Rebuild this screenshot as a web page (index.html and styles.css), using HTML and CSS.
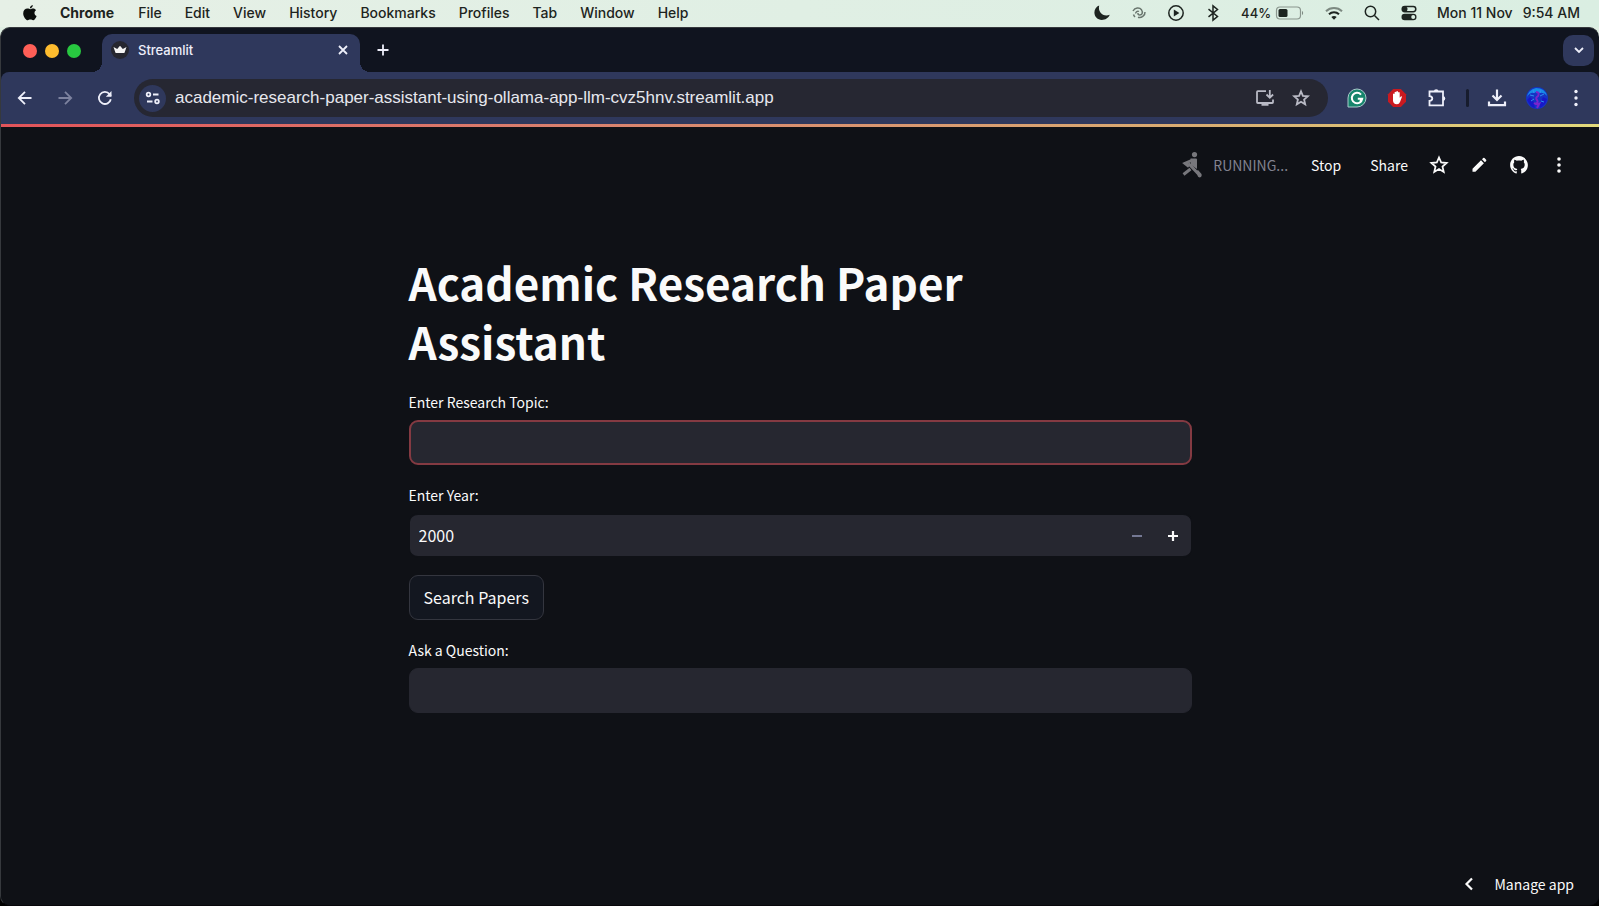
FILE: index.html
```html
<!DOCTYPE html>
<html lang="en">
<head>
<meta charset="utf-8">
<title>Streamlit</title>
<link rel="stylesheet" href="styles.css">
</head>
<body>
<div class="desktop">
  <header class="menubar">
    <nav class="menus" aria-label="Menu bar">
      <button class="menu-item apple" aria-label="Apple menu">
        <svg width="16" height="18" viewBox="0 0 16 18"><path d="M11.2 4.600c1 0 2.200.6 2.900 1.600-2.400 1.400-2 4.800.5 5.700-.6 1.800-2.100 4.300-3.500 4.300-1 0-1.400-.6-2.700-.6s-1.700.6-2.700.6C4.100 16.200 1.200 12.700 1.200 9.400c0-3.200 2-4.800 4.300-4.800 1.100 0 2.100.7 2.800.7.700 0 1.700-.7 2.900-.7zM10.800 1c.1 1.800-1.200 3.400-2.900 3.400C7.700 2.700 9.200 1.200 10.800 1z"/></svg>
      </button>
      <button class="menu-item app-name">Chrome</button>
      <button class="menu-item">File</button>
      <button class="menu-item">Edit</button>
      <button class="menu-item">View</button>
      <button class="menu-item">History</button>
      <button class="menu-item">Bookmarks</button>
      <button class="menu-item">Profiles</button>
      <button class="menu-item">Tab</button>
      <button class="menu-item">Window</button>
      <button class="menu-item">Help</button>
    </nav>
    <div class="status">
      <svg width="18" height="18" viewBox="0 0 18 18"><path d="M6.200 1.500C3.300 2.500 1.400 5.400 1.400 8.600c0 4.100 3.300 7.400 7.400 7.400 3.400 0 6.700-2 7.900-5.200-6.500 2.300-12.100-2.500-10.500-9.300z"/></svg>
      <svg class="faint" width="18" height="18" viewBox="0 0 18 18"><path class="line" d="M3 7C5 3.500 9.500 3.200 11.500 5.800c1.800 2.700.5 5.200-1.700 5.200-1.300 0-2-.8-1.800-2M15 8c.3 3.600-3.800 6.200-7 5.200M5.800 9.500C5.500 8 7.500 6.500 9 7.500M3.500 10.500c.3 1 .8 1.800 1.500 2.500"/></svg>
      <svg width="18" height="18" viewBox="0 0 18 18"><circle class="line" cx="9" cy="9" r="7.200"/><path d="M6.800 5.600v6.800l5.600-3.400z"/></svg>
      <svg width="18" height="18" viewBox="0 0 18 18"><path class="line" d="M4.500 5.200l9 7.300L9 16.200V1.800l4.500 3.700-9 7.300"/></svg>
      <span class="battery"><span class="percent">44%</span>
      <svg width="30" height="18" viewBox="0 0 30 18"><rect class="hair" x="1.500" y="3" width="24" height="12" rx="3.500"/><rect x="3.500" y="5" width="9" height="8" rx="1.500"/><path d="M27 7v4c1.500-.5 1.500-3.500 0-4z" opacity=".5"/></svg></span>
      <svg width="20" height="18" viewBox="0 0 20 18"><path class="wifi pale" d="M2 7.200c4.500-4.200 11.500-4.200 16 0"/><path class="wifi" d="M5 10.300c2.800-2.700 7.200-2.700 10 0"/><path d="M10 15.800l-2.700-2.900c1.500-1.300 3.900-1.300 5.400 0z"/></svg>
      <svg width="18" height="18" viewBox="0 0 18 18"><circle class="line" cx="7.500" cy="7.500" r="5.200"/><path class="line" d="M11.500 11.500l4.500 4.500"/></svg>
      <svg width="18" height="18" viewBox="0 0 18 18"><rect x="1.500" y="9.800" width="15" height="6.500" rx="3.250"/><circle class="mint" cx="13.200" cy="13" r="2"/><rect class="line" x="2.200" y="2.500" width="13.600" height="5.200" rx="2.600"/><circle cx="5" cy="5.100" r="2.500"/></svg>
      <time class="clock"><span>Mon 11 Nov</span><span>9:54 AM</span></time>
    </div>
  </header>

  <div class="window">
    <div class="tabstrip">
      <div class="lights"><button class="light red" aria-label="Close window"></button><button class="light yellow" aria-label="Minimise"></button><button class="light green" aria-label="Zoom"></button></div>
      <div class="tab">
        <svg width="18" height="18" viewBox="0 0 18 18"><circle cx="9" cy="9" r="9" fill="#262730"/><path d="M2.500 6l3.700 2L9 4.800 11.800 8l3.700-2-1.900 5.500q-.2.600-.8.600H5.200q-.6 0-.8-.6z" fill="#f5f5f5"/></svg>
        <span class="tab-title">Streamlit</span>
        <button class="icon-btn" aria-label="Close tab"><svg width="16" height="16" viewBox="0 0 16 16"><path class="stroke" d="M4 4l8 8M12 4l-8 8"/></svg></button>
      </div>
      <button class="icon-btn new-tab" aria-label="New tab"><svg width="16" height="16" viewBox="0 0 16 16"><path class="stroke" d="M8 2.500v11M2.500 8h11"/></svg></button>
      <button class="icon-btn tab-search" aria-label="Search tabs"><svg width="16" height="16" viewBox="0 0 16 16"><path class="stroke" d="M4 6l4 4 4-4"/></svg></button>
    </div>

    <div class="toolbar">
      <button class="icon-btn" aria-label="Back"><svg width="18" height="18" viewBox="0 0 18 18"><path class="stroke" d="M15.500 9H3M9 2.800L2.800 9 9 15.200"/></svg></button>
      <button class="icon-btn dim" aria-label="Forward"><svg width="18" height="18" viewBox="0 0 18 18"><path class="stroke" d="M2.500 9H15M9 2.800L15.200 9 9 15.200"/></svg></button>
      <button class="icon-btn" aria-label="Reload"><svg width="18" height="18" viewBox="0 0 18 18"><path class="stroke" d="M14.800 10.200A6 6 0 1 1 13.600 5.200L15 6.800"/><path d="M15.500 2v5.700H9.800z" fill="currentColor"/></svg></button>
      <div class="omnibox">
        <button class="site-info" aria-label="Site information"><svg width="18" height="18" viewBox="0 0 18 18"><circle class="stroke" cx="4.500" cy="5.500" r="1.800"/><path class="stroke" d="M9 5.500h5.500M3 12.500h5.500"/><circle class="stroke" cx="13" cy="12.500" r="1.800"/></svg></button>
        <input class="url" aria-label="Address" value="academic-research-paper-assistant-using-ollama-app-llm-cvz5hnv.streamlit.app">
        <button class="icon-btn soft" aria-label="Install"><svg width="20" height="20" viewBox="0 0 20 20"><path class="stroke" d="M11 3.200H2.800q-.8 0-.8.800v10.200q0 .8.800.8h14.400q.8 0 .8-.8V11.500M14.800 2v7.500M11.500 6.500l3.300 3.300 3.300-3.300"/><path d="M6.500 15h7v2.800h-7z" fill="currentColor"/></svg></button>
        <button class="icon-btn soft" aria-label="Bookmark"><svg width="18" height="18" viewBox="0 0 18 18"><path class="stroke" d="M9 2.300l1.900 4.600 4.900.4-3.700 3.200 1.100 4.800L9 12.700l-4.200 2.600 1.100-4.800-3.700-3.200 4.900-.4z"/></svg></button>
      </div>
      <div class="extensions">
        <button class="icon-btn ext" aria-label="Grammarly"><svg width="20" height="20" viewBox="0 0 20 20"><path d="M1 10a9 9 0 1 1 9 9H1z" fill="#16856c" stroke="#a9c9cb"/><path d="M14 6.600A5.200 5.200 0 1 0 15.200 10.800H10.800M13.200 13.200l2-2.400" fill="none" stroke="#fff" stroke-width="2"/></svg></button>
        <button class="icon-btn ext" aria-label="Ad blocker"><svg width="20" height="20" viewBox="0 0 20 20"><path d="M6.200 1h7.600L19 6.200v7.600L13.800 19H6.200L1 13.800V6.200z" fill="#ca1a20"/><path d="M6 10V6q.8-1 1.600 0V4.200q.8-1 1.700 0v-.7q.8-1 1.700 0v1q.9-.9 1.700 0v5.300l1.100-1.400q1.100-.6 1.200.4l-2 5.200q-.9 2.200-3 2.200-4 0-4-3.700z" fill="#fff"/></svg></button>
        <button class="icon-btn ext" aria-label="Extensions"><svg width="20" height="20" viewBox="0 0 20 20"><path class="stroke" d="M2.500 3.500H16v13.800H2.500v-4.500q2.800-.2 2.800-2.300T2.500 8.200z"/><path d="M6.900 3.500a2.300 2.300 0 0 1 4.600 0zM16 8.200a2.300 2.300 0 0 1 0 4.600z" fill="currentColor"/></svg></button>
        <span class="divider"></span>
        <button class="icon-btn" aria-label="Downloads"><svg width="20" height="20" viewBox="0 0 20 20"><path class="stroke bold" d="M10 1.500v10M5.500 7.500L10 12l4.500-4.500M2 13.500v3.700h16v-3.700"/></svg></button>
        <button class="icon-btn" aria-label="Profile"><svg width="24" height="24" viewBox="0 0 24 24"><circle cx="12" cy="12" r="11" fill="#1534c4"/><path d="M2 11q1-7 9-9 9 0 11 8-3-4-7-3-3-2-6 0-4-1-7 4z" fill="#168be8"/><path d="M2 14q4 8 8 8l-2-8-3-3zM22 13l-4-2-3 7v4q6-3 7-9z" fill="#1717c9"/><path d="M11 6q4 0 2 4-3 2-1 4 2 3-2 4M9 17q3 2 5 1l-2 4" fill="none" stroke="#7a24cc" stroke-width="2"/><path d="M5 9l4 1M15 10l4-2M6 15l3-2M16 15l3 1M8 4l1 3M16 4l-1 3" stroke="#2f8ef0" stroke-width="1" fill="none"/></svg></button>
        <button class="icon-btn" aria-label="Menu"><svg width="18" height="18" viewBox="0 0 18 18" fill="currentColor"><circle cx="9" cy="2.500" r="1.700"/><circle cx="9" cy="9" r="1.700"/><circle cx="9" cy="15.500" r="1.700"/></svg></button>
      </div>
    </div>

    <div class="page">
      <div class="decoration"></div>
      <div class="app-header">
        <svg class="runner" width="22" height="28" viewBox="0 0 22 28"><circle cx="13.500" cy="3.600" r="2.600"/><path d="M9.500 7.500h5.500q1 0 1 1V18l-6-4z"/><path class="limb" d="M11.500 9L4 12.300l4 3.200M7.500 12.500l10 10.500M9.500 18L2.500 23.500"/><path d="M15 20.500l2-1.500 3.500 4q.8 2.500-1.700 3.500-1.800 0-2.300-2z"/></svg>
        <span class="running">RUNNING...</span>
        <button class="text-btn stop">Stop</button>
        <button class="text-btn share">Share</button>
        <div class="actions">
          <button class="icon-btn" aria-label="Favourite"><svg width="20" height="20" viewBox="0 0 20 20"><path class="stroke" d="M10 2.500l2.200 5 5.400.5-4.100 3.600 1.200 5.300-4.700-2.800-4.700 2.800 1.200-5.300L2.400 8l5.400-.5z"/></svg></button>
          <button class="icon-btn" aria-label="Edit"><svg width="20" height="20" viewBox="0 0 20 20" fill="currentColor"><path d="M3.500 13.800L12 5.300l2.900 2.900-8.500 8.500H3.500zM13 4.300l1.200-1.200q.7-.6 1.300 0l1.600 1.600q.6.600 0 1.300l-1.200 1.200z"/></svg></button>
          <button class="icon-btn" aria-label="GitHub"><svg width="20" height="20" viewBox="-1 -1 18 18" fill="currentColor"><path d="M8 0C3.580 0 0 3.580 0 8c0 3.540 2.290 6.530 5.470 7.590.4.070.55-.17.55-.38 0-.19-.01-.82-.01-1.490-2.010.37-2.530-.49-2.690-.94-.09-.23-.48-.94-.82-1.130-.28-.15-.68-.52-.01-.53.63-.01 1.080.58 1.230.82.72 1.210 1.870.87 2.330.66.07-.52.28-.87.51-1.070-1.780-.2-3.640-.89-3.640-3.950 0-.87.31-1.590.82-2.150-.08-.2-.36-1.020.08-2.120 0 0 .67-.21 2.200.82.64-.18 1.320-.27 2-.27s1.360.09 2 .27c1.530-1.040 2.200-.82 2.200-.82.44 1.100.16 1.920.08 2.120.51.56.82 1.270.82 2.150 0 3.070-1.870 3.750-3.650 3.950.29.25.54.73.54 1.480 0 1.070-.01 1.930-.01 2.200 0 .21.15.46.55.38A8.010 8.010 0 0 0 16 8c0-4.420-3.580-8-8-8z"/></svg></button>
          <button class="icon-btn" aria-label="App menu"><svg width="20" height="20" viewBox="0 0 20 20" fill="currentColor"><circle cx="10" cy="4" r="1.800"/><circle cx="10" cy="10" r="1.800"/><circle cx="10" cy="16" r="1.800"/></svg></button>
        </div>
      </div>

      <main class="content">
        <h1>Academic Research Paper Assistant</h1>
        <form class="form">
          <div class="field">
            <label for="topic">Enter Research Topic:</label>
            <input class="box active" id="topic" type="text">
          </div>
          <div class="field">
            <label for="year">Enter Year:</label>
            <div class="box number">
              <input id="year" type="text" inputmode="numeric" value="2000">
              <button type="button" class="step dim" aria-label="Decrease"><svg width="12" height="12" viewBox="0 0 12 12"><path class="stroke" d="M1 6h10"/></svg></button>
              <button type="button" class="step" aria-label="Increase"><svg width="12" height="12" viewBox="0 0 12 12"><path class="stroke bold" d="M1 6h10M6 1v10"/></svg></button>
            </div>
          </div>
          <button type="button" class="search">Search Papers</button>
          <div class="field">
            <label for="question">Ask a Question:</label>
            <input class="box" id="question" type="text">
          </div>
        </form>
      </main>

      <footer class="footer">
        <button class="manage"><svg width="16" height="16" viewBox="0 0 16 16"><path class="stroke bold" d="M11 2.500L5.500 8l5.500 5.500"/></svg><span>Manage app</span></button>
      </footer>
    </div>
  </div>
</div>
</body>
</html>
```

FILE: styles.css
```css
* { box-sizing: border-box; }

body {
  margin: 0;
  background: #000;
  font-family: Inter, "Liberation Sans", sans-serif;
}

button, input { font: inherit; color: inherit; }
button { padding: 0; border: 0; background: none; }
input { min-width: 0; outline: 0; }
svg { display: block; flex: none; overflow: visible; }

.stroke {
  fill: none;
  stroke: currentColor;
  stroke-width: 1.8;
}
.stroke.bold { stroke-width: 2.2; }

.desktop {
  display: flex;
  flex-direction: column;
  min-height: 100vh;
  background: linear-gradient(#dfeee2 40px, #000 40px);
}

/* macOS menu bar */
.menubar {
  display: flex;
  justify-content: space-between;
  align-items: center;
  height: 27px;
  padding: 0 19px 2px 22px;
  background: linear-gradient(90deg, #e6f0e6, #daeee2);
  color: #1d2420;
  font-size: 14px;
  font-weight: 500;
}
.menus { display: flex; align-items: center; gap: 23px; }
.app-name { margin: 0 1px 0 -1px; font-weight: 700; }
.apple svg { fill: #0c0f0d; }
.status { display: flex; align-items: center; gap: 19px; }
.status svg { fill: #1d2420; }
.status .line { fill: none; stroke: #1d2420; stroke-width: 1.5; }
.status .hair { fill: none; stroke: #8a968e; stroke-width: 1.2; }
.status .wifi { fill: none; stroke: #1d2420; stroke-width: 2; }
.status .pale { opacity: 0.5; }
.status .mint { fill: #daeee2; }
.status .faint { opacity: 0.6; }
.battery { display: flex; align-items: center; gap: 4px; }
.percent { font-size: 13px; }
.clock { display: flex; gap: 10px; }

/* Browser window */
.window {
  display: flex;
  flex: 1;
  flex-direction: column;
  overflow: hidden;
  border: 1px solid #36393d;
  border-right: 0;
  border-bottom-color: #08070b;
  border-radius: 10px;
  background: #10141f;
  color: #eeeffa;
}
.icon-btn { display: grid; place-items: center; }
.dim { color: #7d829f; }
.soft { color: #b9bac5; }

.tabstrip {
  display: flex;
  align-items: center;
  height: 44px;
  padding: 6px 5px 0 22px;
}
.lights { display: flex; gap: 8px; margin: 0 21px 5px 0; }
.light { width: 14px; height: 14px; border-radius: 50%; }
.red { background: #ff5f57; }
.yellow { background: #febc2e; }
.green { background: #28c840; }
.tab {
  position: relative;
  display: flex;
  align-items: center;
  gap: 9px;
  width: 258px;
  height: 38px;
  padding: 0 9px 6px;
  border-radius: 10px 10px 0 0;
  background: #2f385c;
}
.tab::before, .tab::after {
  content: "";
  position: absolute;
  bottom: 0;
  width: 10px;
  height: 10px;
}
.tab::before { right: 100%; background: radial-gradient(circle at 0 0, transparent 10px, #2f385c 10px); }
.tab::after { left: 100%; background: radial-gradient(circle at 100% 0, transparent 10px, #2f385c 10px); }
.tab-title { flex: 1; font-size: 13px; font-weight: 500; }
.new-tab { margin: 0 auto 6px 15px; }
.tab-search {
  width: 31px;
  height: 31px;
  margin-bottom: 6px;
  border-radius: 10px;
  background: #2f385c;
}

.toolbar {
  display: flex;
  align-items: center;
  gap: 22px;
  height: 52px;
  padding: 0 14px 0 15px;
  border-radius: 8px 8px 0 0;
  background: #2f385c;
}
.omnibox {
  display: flex;
  flex: 1;
  align-items: center;
  gap: 17px;
  height: 38px;
  margin-left: -2px;
  padding: 0 18px 0 5px;
  border-radius: 19px;
  background: #262732;
}
.site-info {
  display: grid;
  place-items: center;
  width: 27px;
  height: 27px;
  margin-right: -8px;
  border-radius: 50%;
  background: #2f385c;
}
.url {
  flex: 1;
  padding: 0;
  border: 0;
  background: none;
  color: #e6e7ee;
  font-family: "Liberation Sans", Arial, sans-serif;
  font-size: 17px;
}
.extensions { display: flex; align-items: center; gap: 18px; margin-left: -4px; }
.ext { width: 22px; }
.divider { width: 3px; height: 18px; border-radius: 2px; background: #171c2d; }

/* Streamlit page */
.page {
  display: flex;
  flex: 1;
  flex-direction: column;
  background: #0f1116;
  color: #fafafa;
  font-family: "Noto Sans CJK JP", "Open Sans", sans-serif;
}
.decoration {
  height: 3px;
  background: linear-gradient(90deg, #e2545a, #d9806e 35%, #d9ad72 75%, #e2da7c);
}
.app-header {
  display: flex;
  align-items: center;
  justify-content: flex-end;
  padding: 24px 30px 0 0;
  font-size: 14px;
  line-height: 28px;
}
.runner { fill: #77777c; }
.limb { fill: none; stroke: #77777c; stroke-width: 3; }
.running { margin-left: 10px; color: #81828f; }
.stop { margin-left: 23px; }
.share { margin-left: 29px; }
.actions { display: flex; align-items: center; gap: 20px; margin-left: 21px; }

.content {
  width: 100%;
  max-width: 783px;
  margin: 0 auto;
  padding-top: 74px;
}
h1 {
  margin: 0 0 18px;
  padding-right: 60px;
  font-size: 44px;
  font-weight: 700;
  line-height: 59px;
}
.form { display: flex; flex-direction: column; gap: 17px; }
.field { display: flex; flex-direction: column; gap: 5px; }
.field label { font-size: 14px; line-height: 26px; }
.box {
  width: 100%;
  height: 45px;
  padding: 0 9px;
  border: 1px solid #262730;
  border-radius: 9px;
  background: #262730;
  font-size: 16px;
}
.active { border: 2px solid #843a42; }
.number {
  display: flex;
  align-items: center;
  border-color: #0f1116;
  border-width: 2px 1px;
  padding-right: 0;
}
.number input { flex: 1; padding: 0 0 2px; border: 0; background: none; }
.step { display: grid; place-items: center; width: 36px; height: 41px; }
.search {
  align-self: flex-start;
  height: 45px;
  padding: 0 14px 2px;
  border: 1px solid #34363f;
  border-radius: 9px;
  background: #131720;
  font-size: 16px;
}

.footer {
  display: flex;
  justify-content: flex-end;
  margin-top: auto;
  padding: 0 25px 7px 0;
}
.manage { display: flex; align-items: center; gap: 18px; font-size: 14px; line-height: 28px; }
```
